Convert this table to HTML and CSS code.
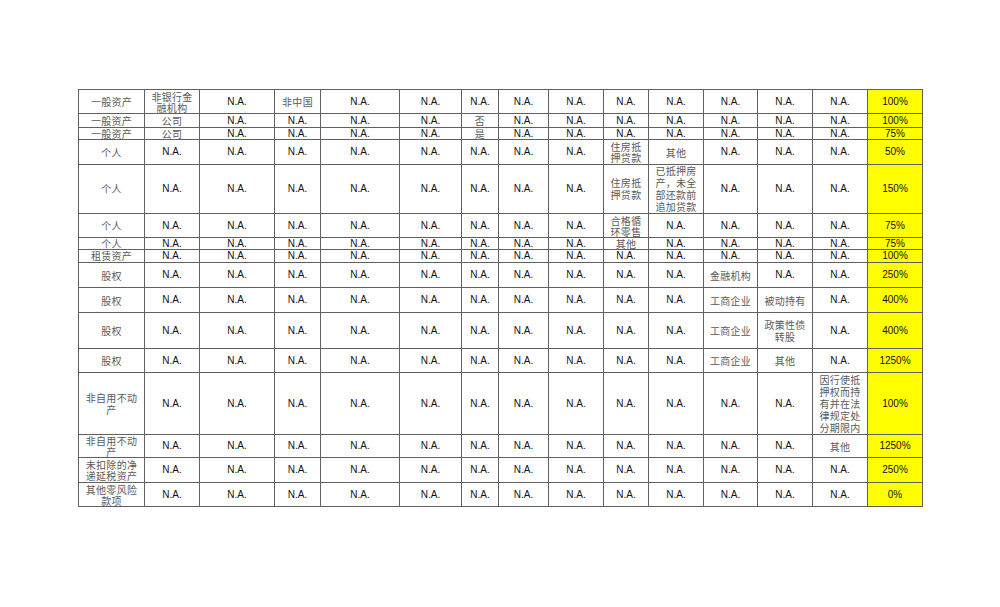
FILE: index.html
```html
<!DOCTYPE html>
<html>
<head>
<meta charset="utf-8">
<link rel="stylesheet" href="styles.css">
</head>
<body>
<table class="risk">
<colgroup>
<col class="c66"><col class="c55"><col class="c75"><col class="c46"><col class="c79"><col class="c62"><col class="c37"><col class="c50"><col class="c55"><col class="c45"><col class="c55"><col class="c54"><col class="c55"><col class="c55"><col class="c55">
</colgroup>
<tbody>
<tr class="h24"><td class="zh">一般资产</td><td class="zh">非银行金<br>融机构</td><td>N.A.</td><td class="zh">非中国</td><td>N.A.</td><td>N.A.</td><td>N.A.</td><td>N.A.</td><td>N.A.</td><td>N.A.</td><td>N.A.</td><td>N.A.</td><td>N.A.</td><td>N.A.</td><td class="pct">100%</td></tr>
<tr class="h14"><td class="zh">一般资产</td><td class="zh">公司</td><td>N.A.</td><td>N.A.</td><td>N.A.</td><td>N.A.</td><td class="zh">否</td><td>N.A.</td><td>N.A.</td><td>N.A.</td><td>N.A.</td><td>N.A.</td><td>N.A.</td><td>N.A.</td><td class="pct">100%</td></tr>
<tr class="h12"><td class="zh">一般资产</td><td class="zh">公司</td><td>N.A.</td><td>N.A.</td><td>N.A.</td><td>N.A.</td><td class="zh">是</td><td>N.A.</td><td>N.A.</td><td>N.A.</td><td>N.A.</td><td>N.A.</td><td>N.A.</td><td>N.A.</td><td class="pct">75%</td></tr>
<tr class="h25"><td class="zh">个人</td><td>N.A.</td><td>N.A.</td><td>N.A.</td><td>N.A.</td><td>N.A.</td><td>N.A.</td><td>N.A.</td><td>N.A.</td><td class="zh">住房抵<br>押贷款</td><td class="zh">其他</td><td>N.A.</td><td>N.A.</td><td>N.A.</td><td class="pct">50%</td></tr>
<tr class="h48"><td class="zh">个人</td><td>N.A.</td><td>N.A.</td><td>N.A.</td><td>N.A.</td><td>N.A.</td><td>N.A.</td><td>N.A.</td><td>N.A.</td><td class="zh">住房抵<br>押贷款</td><td class="zh">已抵押房<br>产，未全<br>部还款前<br>追加贷款</td><td>N.A.</td><td>N.A.</td><td>N.A.</td><td class="pct">150%</td></tr>
<tr class="h24"><td class="zh">个人</td><td>N.A.</td><td>N.A.</td><td>N.A.</td><td>N.A.</td><td>N.A.</td><td>N.A.</td><td>N.A.</td><td>N.A.</td><td class="zh">合格循<br>环零售</td><td>N.A.</td><td>N.A.</td><td>N.A.</td><td>N.A.</td><td class="pct">75%</td></tr>
<tr class="h12"><td class="zh">个人</td><td>N.A.</td><td>N.A.</td><td>N.A.</td><td>N.A.</td><td>N.A.</td><td>N.A.</td><td>N.A.</td><td>N.A.</td><td class="zh">其他</td><td>N.A.</td><td>N.A.</td><td>N.A.</td><td>N.A.</td><td class="pct">75%</td></tr>
<tr class="h13"><td class="zh">租赁资产</td><td>N.A.</td><td>N.A.</td><td>N.A.</td><td>N.A.</td><td>N.A.</td><td>N.A.</td><td>N.A.</td><td>N.A.</td><td>N.A.</td><td>N.A.</td><td>N.A.</td><td>N.A.</td><td>N.A.</td><td class="pct">100%</td></tr>
<tr class="h25"><td class="zh">股权</td><td>N.A.</td><td>N.A.</td><td>N.A.</td><td>N.A.</td><td>N.A.</td><td>N.A.</td><td>N.A.</td><td>N.A.</td><td>N.A.</td><td>N.A.</td><td class="zh">金融机构</td><td>N.A.</td><td>N.A.</td><td class="pct">250%</td></tr>
<tr class="h25"><td class="zh">股权</td><td>N.A.</td><td>N.A.</td><td>N.A.</td><td>N.A.</td><td>N.A.</td><td>N.A.</td><td>N.A.</td><td>N.A.</td><td>N.A.</td><td>N.A.</td><td class="zh">工商企业</td><td class="zh">被动持有</td><td>N.A.</td><td class="pct">400%</td></tr>
<tr class="h36"><td class="zh">股权</td><td>N.A.</td><td>N.A.</td><td>N.A.</td><td>N.A.</td><td>N.A.</td><td>N.A.</td><td>N.A.</td><td>N.A.</td><td>N.A.</td><td>N.A.</td><td class="zh">工商企业</td><td class="zh">政策性债<br>转股</td><td>N.A.</td><td class="pct">400%</td></tr>
<tr class="h24"><td class="zh">股权</td><td>N.A.</td><td>N.A.</td><td>N.A.</td><td>N.A.</td><td>N.A.</td><td>N.A.</td><td>N.A.</td><td>N.A.</td><td>N.A.</td><td>N.A.</td><td class="zh">工商企业</td><td class="zh">其他</td><td>N.A.</td><td class="pct">1250%</td></tr>
<tr class="h62"><td class="zh">非自用不动<br>产</td><td>N.A.</td><td>N.A.</td><td>N.A.</td><td>N.A.</td><td>N.A.</td><td>N.A.</td><td>N.A.</td><td>N.A.</td><td>N.A.</td><td>N.A.</td><td>N.A.</td><td>N.A.</td><td class="zh">因行使抵<br>押权而持<br>有并在法<br>律规定处<br>分期限内</td><td class="pct">100%</td></tr>
<tr class="h23"><td class="zh">非自用不动<br>产</td><td>N.A.</td><td>N.A.</td><td>N.A.</td><td>N.A.</td><td>N.A.</td><td>N.A.</td><td>N.A.</td><td>N.A.</td><td>N.A.</td><td>N.A.</td><td>N.A.</td><td>N.A.</td><td class="zh">其他</td><td class="pct">1250%</td></tr>
<tr class="h25"><td class="zh">未扣除的净<br>递延税资产</td><td>N.A.</td><td>N.A.</td><td>N.A.</td><td>N.A.</td><td>N.A.</td><td>N.A.</td><td>N.A.</td><td>N.A.</td><td>N.A.</td><td>N.A.</td><td>N.A.</td><td>N.A.</td><td>N.A.</td><td class="pct">250%</td></tr>
<tr class="h24"><td class="zh">其他零风险<br>款项</td><td>N.A.</td><td>N.A.</td><td>N.A.</td><td>N.A.</td><td>N.A.</td><td>N.A.</td><td>N.A.</td><td>N.A.</td><td>N.A.</td><td>N.A.</td><td>N.A.</td><td>N.A.</td><td>N.A.</td><td class="pct">0%</td></tr>
</tbody>
</table>
</body>
</html>
```

FILE: styles.css
```css
html, body {
  margin: 0;
  padding: 0;
  background: #ffffff;
}

body {
  padding: 89px 0 0 78px;
}

.risk {
  border-collapse: collapse;
  table-layout: fixed;
  width: 844px;
  font-family: "Liberation Sans", "Noto Sans CJK SC", sans-serif;
  font-size: 10px;
  color: #111;
}

.c66 { width: 66px; }
.c55 { width: 55px; }
.c75 { width: 75px; }
.c46 { width: 46px; }
.c79 { width: 79px; }
.c62 { width: 62px; }
.c37 { width: 37px; }
.c50 { width: 50px; }
.c45 { width: 45px; }
.c54 { width: 54px; }

.risk td {
  border: 1px solid #606060;
  padding: 0;
  text-align: center;
  vertical-align: middle;
  line-height: 12px;
  white-space: nowrap;
}

.risk td.zh {
  font-family: "Noto Sans CJK SC", sans-serif;
  color: #5a5a5a;
  letter-spacing: 0.3px;
  line-height: 12px;
}

.risk td.pct {
  background: #ffff00;
  color: #111;
}

.risk .h12 td,
.risk .h13 td,
.risk .h14 td {
  line-height: 10px;
}

.risk .h23 td.zh,
.risk .h24 td.zh,
.risk .h25 td.zh {
  line-height: 11px;
}

.h12 td { height: 11px; }
.h13 td { height: 12px; }
.h14 td { height: 13px; }
.h23 td { height: 22px; }
.h24 td { height: 23px; }
.h25 td { height: 24px; }
.h36 td { height: 35px; }
.h48 td { height: 47px; }
.h62 td { height: 61px; }
```
